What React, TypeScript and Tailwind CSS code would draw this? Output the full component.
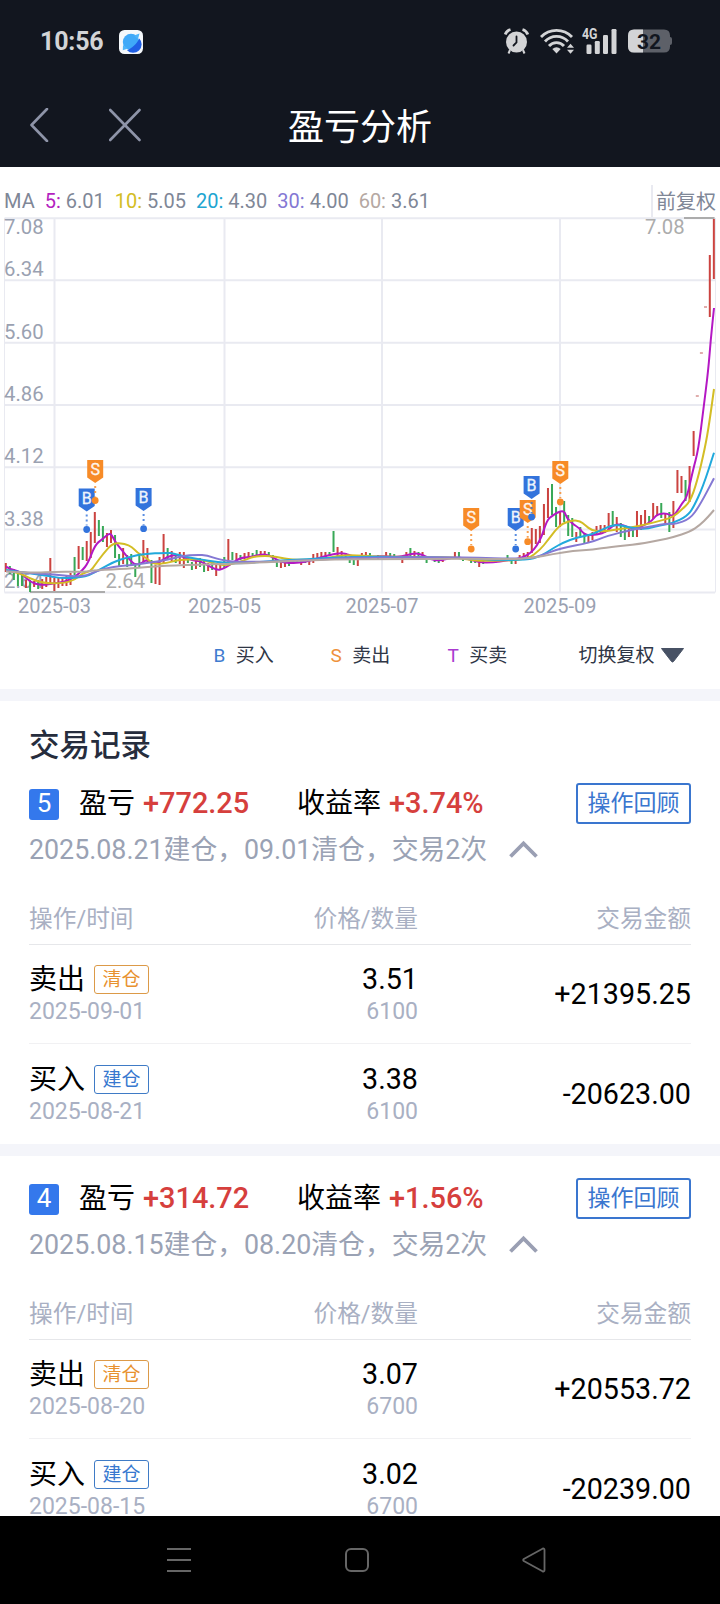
import React from "react";

type Point = [number, number];
type Candle = [number, number, number, "r" | "g"];

// index on the time axis, top, bottom, direction
const candles: Candle[] = [
  [0, 563, 572, "r"], [1, 566, 574, "g"], [2, 569, 580, "g"], [3, 572, 586, "g"], [4, 575, 586, "g"],
  [5, 580, 588, "r"], [6, 580, 592, "g"], [7, 581, 587, "r"], [8, 580, 589, "g"], [9, 579, 589, "r"],
  [10, 577, 587, "r"], [11, 558, 585, "r"], [12, 578, 591, "r"], [13, 577, 588, "r"], [14, 577, 586, "r"],
  [15, 575, 586, "r"], [16, 573, 585, "r"], [17, 557, 575, "g"], [18, 546, 569, "r"], [19, 547, 560, "g"],
  [20, 541, 561, "r"], [21, 532, 558, "r"], [22, 512, 543, "r"], [23, 520, 536, "g"], [24, 526, 542, "g"],
  [25, 533, 547, "r"], [26, 530, 543, "r"], [27, 535, 558, "g"], [28, 554, 566, "g"], [29, 548, 564, "r"],
  [30, 555, 567, "g"], [31, 554, 566, "g"], [32, 563, 577, "g"], [33, 553, 568, "g"], [34, 540, 563, "r"],
  [35, 548, 563, "r"], [36, 560, 583, "g"], [37, 565, 584, "r"], [38, 557, 585, "r"], [39, 534, 563, "r"],
  [40, 548, 560, "g"], [41, 551, 561, "r"], [42, 555, 563, "g"], [43, 552, 564, "r"], [44, 552, 568, "r"],
  [45, 557, 563, "g"], [46, 562, 570, "g"], [47, 558, 569, "r"], [48, 558, 567, "g"], [49, 560, 572, "g"],
  [50, 563, 571, "r"], [51, 563, 570, "g"], [52, 565, 576, "r"], [53, 563, 569, "r"], [54, 557, 568, "g"],
  [55, 539, 563, "r"], [56, 552, 560, "g"], [57, 553, 560, "r"], [58, 555, 560, "g"], [59, 553, 559, "r"],
  [60, 552, 558, "r"], [61, 553, 558, "g"], [62, 550, 556, "g"], [63, 551, 557, "r"], [64, 551, 556, "r"],
  [65, 552, 557, "g"], [66, 555, 560, "g"], [67, 562, 567, "g"], [68, 562, 568, "r"], [69, 562, 567, "r"],
  [70, 562, 566, "g"], [71, 559, 564, "r"], [72, 559, 563, "g"], [73, 560, 565, "r"], [74, 559, 563, "g"],
  [75, 560, 565, "r"], [76, 554, 563, "r"], [77, 553, 559, "r"], [78, 552, 559, "r"], [79, 552, 557, "r"],
  [80, 552, 556, "g"], [81, 531, 552, "g"], [82, 547, 557, "r"], [83, 551, 558, "r"], [84, 553, 559, "r"],
  [85, 557, 563, "g"], [86, 559, 565, "g"], [87, 560, 566, "r"], [88, 553, 559, "r"], [89, 552, 558, "r"],
  [90, 553, 557, "g"], [92, 555, 559, "g"], [94, 552, 558, "r"], [95, 553, 558, "g"], [96, 554, 558, "g"],
  [98, 557, 563, "r"], [99, 552, 558, "r"], [100, 548, 557, "g"], [101, 551, 557, "r"], [102, 552, 557, "g"],
  [103, 552, 557, "r"], [104, 558, 563, "g"], [106, 558, 562, "g"], [107, 559, 563, "g"], [108, 558, 562, "r"],
  [111, 552, 557, "r"], [112, 552, 558, "g"], [113, 557, 561, "g"], [114, 557, 560, "r"], [115, 557, 563, "g"],
  [116, 558, 563, "g"], [117, 562, 567, "r"], [118, 561, 564, "g"], [121, 560, 563, "r"], [124, 555, 559, "g"],
  [125, 560, 564, "g"], [126, 560, 564, "r"], [127, 555, 559, "r"], [128, 553, 557, "r"], [129, 552, 557, "r"],
  [130, 528, 553, "r"], [131, 529, 544, "r"], [132, 526, 543, "r"], [133, 504, 535, "r"], [134, 488, 518, "r"],
  [135, 484, 515, "g"], [136, 507, 527, "g"], [137, 512, 527, "r"], [138, 501, 522, "g"], [139, 515, 536, "g"],
  [140, 518, 537, "g"], [141, 532, 542, "r"], [142, 527, 537, "g"], [143, 533, 543, "g"], [144, 535, 542, "r"],
  [145, 532, 540, "r"], [146, 526, 535, "r"], [147, 525, 534, "r"], [148, 525, 533, "r"], [149, 513, 530, "r"],
  [150, 511, 527, "g"], [151, 517, 532, "r"], [152, 523, 537, "g"], [153, 526, 540, "g"], [154, 527, 537, "r"],
  [155, 527, 537, "g"], [156, 511, 537, "r"], [157, 515, 530, "r"], [158, 510, 525, "r"], [159, 516, 523, "g"],
  [160, 503, 519, "r"], [161, 506, 515, "r"], [162, 503, 518, "g"], [163, 513, 523, "r"], [164, 512, 532, "g"],
  [165, 501, 528, "r"], [166, 470, 493, "r"], [167, 476, 493, "r"], [168, 480, 501, "g"], [169, 466, 502, "r"],
  [170, 431, 456, "r"], [174, 255, 317, "r"], [175, 219, 279, "r"],
];

// days that opened at the limit and never moved
const limitDays: Point[] = [[697.3, 396], [701.4, 353], [705.5, 307]];

const ma60: Point[] = [
  [6, 571.5], [33, 573], [57, 571.7], [83, 572], [97, 570], [127, 569], [150, 566.7], [183, 565], [240, 563.5],
  [273, 561.7], [337, 559.3], [383, 559.3], [470, 558.6], [507, 559.3], [533, 558], [553, 554], [573, 551],
  [593, 549.7], [610, 547], [640, 544], [660, 540], [673, 537.3], [690, 531.7], [700, 525], [708, 517], [714, 510],
];
const ma30: Point[] = [
  [6, 571], [30, 573.3], [50, 574], [73, 576.7], [87, 575.7], [97, 570.7], [113, 566.7], [133, 565], [150, 562.3],
  [167, 560], [182, 556], [197, 554.7], [207, 555.3], [220, 560], [240, 562.3], [307, 560.7], [337, 558.3],
  [383, 557.3], [460, 557], [527, 559.3], [543, 555], [560, 548.3], [590, 542.7], [607, 536], [633, 529.3],
  [653, 526], [667, 523.3], [675, 524.3], [690, 519], [700, 505], [714, 478.3],
];
const ma20: Point[] = [
  [6, 570], [30, 573.3], [50, 576], [60, 578.3], [80, 577.7], [90, 575], [100, 569.3], [113, 562.3], [127, 557.3],
  [143, 554], [167, 552.7], [173, 553.3], [187, 557.3], [200, 559.3], [217, 562.3], [240, 563.7], [273, 560.7],
  [307, 559.3], [337, 557.3], [373, 556.7], [407, 557.3], [460, 557.5], [493, 560], [527, 560], [540, 556.7],
  [553, 548.3], [563, 542.7], [577, 537.3], [590, 535], [600, 530.7], [610, 526], [620, 524.7], [630, 527.7],
  [647, 529.3], [660, 525], [673, 523.3], [687, 516], [693, 508.3], [703, 486.7], [714, 452.7],
];
const ma10: Point[] = [
  [6, 570], [20, 573.3], [30, 578.3], [43, 583.3], [63, 583.3], [75, 580], [83, 572.7], [90, 571.7], [95, 565],
  [103, 554], [113, 542.7], [125, 544], [132, 546.7], [137, 552.7], [147, 558.3], [153, 564], [167, 563.3],
  [177, 560], [185, 560], [197, 558.7], [210, 561.7], [223, 566], [240, 562], [253, 556.7], [265, 555.7],
  [277, 556.7], [287, 559.3], [307, 560], [320, 559.3], [337, 556], [353, 555], [373, 556.7], [413, 556.7],
  [427, 557.3], [453, 557.3], [465, 559], [480, 561], [507, 560.7], [528, 559], [540, 550], [548, 540], [557, 528.3],
  [563, 523.3], [573, 520.3], [580, 521], [585, 525], [592, 530.7], [603, 531.7], [617, 529.3], [630, 527.7],
  [647, 524.3], [663, 520], [673, 517.3], [682, 509.3], [690, 501.7], [697, 482], [705, 448], [709.3, 423], [714, 389],
];
const ma5: Point[] = [
  [6, 566.7], [10, 569.3], [18, 570.7], [23, 575], [30, 581.7], [40, 585.3], [50, 584], [60, 582.3], [67, 581],
  [75, 576.7], [82, 570.7], [88, 563.3], [95, 545], [102, 539.3], [107, 535], [111, 533.3], [115, 541.7],
  [123, 551.7], [130, 560], [135, 565], [142, 563.3], [147, 559.3], [152, 563.3], [158, 563.3], [167, 556.7],
  [177, 554.3], [183, 556.7], [192, 560.7], [200, 560.7], [208, 565.7], [217, 570], [222, 569.3], [230, 565],
  [240, 557.5], [250, 557.3], [258, 555], [265, 554.3], [272, 556.7], [278, 560.7], [287, 563.3], [300, 562.7],
  [310, 560.7], [323, 556.7], [337, 553.3], [345, 553.3], [353, 556.7], [363, 559.3], [373, 556.7], [387, 556],
  [400, 557.3], [413, 553.3], [422, 554], [430, 559.3], [440, 560.7], [453, 557.3], [467, 558.3], [480, 562.7],
  [493, 562.3], [507, 560.7], [528, 556.7], [540, 541.7], [547, 520], [552, 516], [557, 512.7], [564, 510.3],
  [567, 518.3], [573, 524.3], [579, 527.7], [585, 535.3], [597, 534.7], [607, 531.7], [613, 525], [620, 524.3],
  [627, 526.7], [633, 529.3], [643, 526], [652, 521], [657, 514], [667, 513.3], [673, 516.7], [678, 510],
  [682, 503.3], [687, 497.3], [693, 470], [698.3, 450], [703.3, 410], [708.3, 370], [710.7, 340], [714, 308],
];

const averages = [
  { days: "5:", value: "6.01", text: "text-[#b41fc0]", stroke: "#b418c4", points: ma5 },
  { days: "10:", value: "5.05", text: "text-[#d3bd25]", stroke: "#d3bd25", points: ma10 },
  { days: "20:", value: "4.30", text: "text-[#21a5d1]", stroke: "#21a9dc", points: ma20 },
  { days: "30:", value: "4.00", text: "text-[#8478d4]", stroke: "#8478d4", points: ma30 },
  { days: "60:", value: "3.61", text: "text-[#b5a8a2]", stroke: "#b5a8a2", points: ma60 },
];

const priceLabels: [string, number][] = [
  ["7.08", 233.7], ["6.34", 275.7], ["5.60", 338.7], ["4.86", 401], ["4.12", 463], ["3.38", 525.7], ["2.64", 588],
];

const months: [string, number][] = [
  ["2025-03", 54.5], ["2025-05", 224.5], ["2025-07", 382], ["2025-09", 560],
];

// x, top of the flag, dot
const trades: ["B" | "S", number, number, number][] = [
  ["B", 86.7, 488.5, 529.5],
  ["S", 95.2, 460, 500.5],
  ["B", 143.6, 488, 528.7],
  ["S", 471.2, 508, 549],
  ["B", 515.7, 508, 549],
  ["S", 527.7, 500, 541.7],
  ["B", 531.6, 476, 517],
  ["S", 560.3, 461, 502],
];

const records = [
  {
    no: 5,
    profit: "+772.25",
    rate: "+3.74%",
    summary: "2025.08.21建仓，09.01清仓，交易2次",
    rows: [
      { side: "卖出", tag: "清仓", date: "2025-09-01", price: "3.51", count: "6100", amount: "+21395.25" },
      { side: "买入", tag: "建仓", date: "2025-08-21", price: "3.38", count: "6100", amount: "-20623.00" },
    ],
  },
  {
    no: 4,
    profit: "+314.72",
    rate: "+1.56%",
    summary: "2025.08.15建仓，08.20清仓，交易2次",
    rows: [
      { side: "卖出", tag: "清仓", date: "2025-08-20", price: "3.07", count: "6700", amount: "+20553.72" },
      { side: "买入", tag: "建仓", date: "2025-08-15", price: "3.02", count: "6700", amount: "-20239.00" },
    ],
  },
];

const toPath = (points: Point[]) => {
  let d = `M${points[0][0]} ${points[0][1]}`;
  for (let i = 1; i < points.length - 1; i++) {
    const [x, y] = points[i];
    const [nx, ny] = points[i + 1];
    d += `Q${x} ${y} ${(x + nx) / 2} ${(y + ny) / 2}`;
  }
  const last = points[points.length - 1];
  return `${d}L${last[0]} ${last[1]}`;
};

const StatusBar = () => (
  <div className="flex h-[83px] items-center pl-10 pr-[48px] text-[#d3d4d6]">
    <span className="text-[25px] font-bold leading-none tracking-[-0.2px]">10:56</span>
    <svg width="24" height="24" viewBox="0 0 24 24" className="ml-4">
      <rect width="24" height="24" rx="5.5" fill="#f4f8fb" />
      <circle cx="12" cy="12" r="8.2" fill="#3fa9f8" />
      <path d="M20.3 8.5A8.4 8.4 0 0 1 8 20.2C13 18.500 18 13.500 20.300 8.500Z" fill="#1f5fe4" />
      <path d="M15 5.500L20.500 3.600L19 9Z M4 15L3.800 20.300L9 18.500Z" fill="#4db4fa" />
    </svg>
    <div className="ml-auto flex items-center pb-0.5">
      <svg width="26" height="26" viewBox="0 0 26 26">
        <circle cx="12.500" cy="14" r="10.500" fill="currentColor" />
        <path d="M1.200 6.500A8 8 0 0 1 6.500 1.500M23.800 6.500A8 8 0 0 0 18.500 1.500" stroke="currentColor" strokeWidth="2.800" fill="none" />
        <path d="M6 22L4.500 25.500M19 22L20.500 25.500" stroke="currentColor" strokeWidth="2" />
        <path d="M12.500 8.500V14.500L9.500 17.500" stroke="#12161f" strokeWidth="1.800" fill="none" strokeLinecap="round" />
      </svg>
      <svg width="36" height="26" viewBox="0 0 36 26" className="ml-[10px]" fill="none" stroke="currentColor" strokeWidth="2.800">
        <path d="M1 9A21.500 21.500 0 0 1 32 9" />
        <path d="M5 13.500A15.500 15.500 0 0 1 28 13.500" />
        <path d="M9 18A10 10 0 0 1 24 18" />
        <path d="M12.300 21Q16.500 17.700 20.700 21L16.500 25.400Z" fill="currentColor" stroke="none" />
        <path d="M27 19.700L30.500 15.700L34 19.700ZM27 21.700L30.500 25.700L34 21.700Z" fill="currentColor" stroke="none" />
      </svg>
      <svg width="36" height="26" viewBox="0 0 36 26" className="ml-[6px] overflow-visible" fill="currentColor">
        <text x="0" y="11" fontSize="14.500" fontWeight="700" textLength="15.500" lengthAdjust="spacingAndGlyphs">4G</text>
        <rect x="4.500" y="16.500" width="5" height="9.500" rx="1.200" />
        <rect x="12.800" y="13" width="5" height="13" rx="1.200" />
        <rect x="21" y="7" width="5" height="19" rx="1.200" />
        <rect x="29.500" y="1" width="5" height="25" rx="1.200" />
      </svg>
      <svg width="44" height="24" viewBox="0 0 44 24" className="ml-[10px]">
        <path d="M6 0.500H36Q42 0.500 42 6.500V17.500Q42 23.500 36 23.500H6Q0 23.500 0 17.500V6.500Q0 0.500 6 0.500Z" fill="#5d6068" />
        <path d="M42 8Q44 8 44 10V14Q44 16 42 16Z" fill="#5d6068" />
        <path d="M6 0.500H15V23.500H6Q0 23.500 0 17.500V6.500Q0 0.500 6 0.500Z" fill="#d3d4d6" />
        <text x="21" y="19.500" fontSize="21" fontWeight="700" textAnchor="middle" fill="#12161f">32</text>
      </svg>
    </div>
  </div>
);

const TitleBar = () => (
  <div className="grid h-[84px] grid-cols-[1fr_auto_1fr] items-center px-[30px]">
    <div className="flex items-center gap-[60px]">
      <svg width="19" height="34" viewBox="0 0 19 34" fill="none" stroke="#8e94a8" strokeWidth="2.600" strokeLinecap="round" strokeLinejoin="round">
        <path d="M17 1L1.500 17L17 33" />
      </svg>
      <svg width="32" height="34" viewBox="0 0 32 34" fill="none" stroke="#8e94a8" strokeWidth="2.600" strokeLinecap="round">
        <path d="M1.200 2L30.500 32M30.500 2L1.200 32" />
      </svg>
    </div>
    <h1 className="pt-[5px] text-[36px] leading-none text-white">盈亏分析</h1>
  </div>
);

const Chart = () => (
  <svg width="720" height="407" viewBox="0 217 720 407" className="block overflow-visible">
    <g stroke="#e9eaf1" strokeWidth="2">
      {[218.3, 280.2, 342.7, 405, 467.2, 529.6, 592.5].map((y) => (
        <line key={y} x1="4.500" x2="715" y1={y} y2={y} />
      ))}
      {months.map(([name, x]) => (
        <line key={name} x1={x} x2={x} y1="218" y2="592.500" />
      ))}
      <path d="M4.500 218V592.500M715.500 218V592.500" strokeWidth="1" />
    </g>
    <g fontSize="20.300" fill="#9aa1b1">
      {priceLabels.map(([label, y]) => (
        <text key={label} x="4" y={y}>{label}</text>
      ))}
      {months.map(([name, x]) => (
        <text key={name} x={x} y="613" fontSize="20" textAnchor="middle">{name}</text>
      ))}
    </g>
    <path d="M684 218H714.500M30 592H105" stroke="#acacac" strokeWidth="1.800" />
    {candles.map(([i, top, bottom, dir]) => (
      <rect
        key={i}
        x={4.8 + i * 4.046}
        y={top}
        width="2"
        height={bottom - top}
        fill={dir === "r" ? "#cb4340" : "#38a857"}
      />
    ))}
    {limitDays.map(([x, y]) => (
      <rect key={x} x={x - 1.5} y={y - 0.8} width="3" height="1.600" fill="#d99a98" />
    ))}
    <g fill="none" strokeWidth="2" strokeLinejoin="round">
      {averages.map((ma) => (
        <path key={ma.days} d={toPath(ma.points)} stroke={ma.stroke} />
      ))}
    </g>
    <g fontSize="20.300" fill="#acacac">
      <text x="645" y="233.700">7.08</text>
      <text x="105.500" y="588">2.64</text>
    </g>
    {trades.map(([kind, x, top, dot]) => {
      const color = kind === "B" ? "#3273dc" : "#f78b27";
      return (
        <g key={x} fill={color}>
          <path d={`M${x - 8} ${top}h16v17.500l-8 5.500l-8 -5.500Z`} />
          <line x1={x} x2={x} y1={top + 26} y2={dot - 4} stroke={color} strokeWidth="2" strokeDasharray="2 3" opacity="0.8" />
          <circle cx={x} cy={dot} r="3.400" />
          <text x={x} y={top + 15} fontSize="16" textAnchor="middle" fill="#fff" fillOpacity="0.900" stroke="#fff" strokeWidth="0.300">{kind}</text>
        </g>
      );
    })}
  </svg>
);

const ChartPanel = () => (
  <section className="h-[522px] bg-white">
    <div className="flex h-[50px] items-end justify-between pt-[18px] text-[20px] text-[#7f8797]">
      <div className="flex gap-[10px] pb-px pl-1">
        <span>MA</span>
        {averages.map((ma) => (
          <span key={ma.days} className="whitespace-pre">
            <span className={ma.text}>{ma.days}</span> {ma.value}
          </span>
        ))}
      </div>
      <div className="flex h-[32px] items-center border-l-2 border-[#e9eaf1] pl-[3px] pr-1 pt-0.5 leading-none">前复权</div>
    </div>
    <Chart />
    <div className="flex h-[62px] items-center pl-[213.500px] text-[19px] leading-none text-[#2f3646]">
      <span className="w-[117px]"><span className="mr-[10.500px] text-[#3f7bcf]">B</span>买入</span>
      <span className="w-[117px]"><span className="mr-[10.500px] text-[#ee913b]">S</span>卖出</span>
      <span className="w-[131px]"><span className="mr-[10.500px] text-[#a93ad0]">T</span>买卖</span>
      <span>切换复权</span>
      <svg width="25" height="16" viewBox="0 0 25 16" className="ml-[5px]">
        <path d="M1.500 1.500H23.500L13.500 14.500Q12.500 15.500 11.500 14.500Z" fill="#475164" stroke="#475164" strokeLinejoin="round" />
      </svg>
    </div>
  </section>
);

const Tag = ({ label }: { label: string }) => {
  const tone = label === "清仓" ? "border-[#dc9a48] text-[#e8912f]" : "border-[#3f7bc6] text-[#3878cf]";
  return (
    <span className={`ml-[9px] flex h-[29px] w-[55px] items-center justify-center rounded-[3px] border text-[19px] leading-none ${tone}`}>
      {label}
    </span>
  );
};

const TradeRecord = ({ record }: { record: (typeof records)[number] }) => (
  <section className="px-[29px]">
    <div className="flex h-[41px] items-center leading-none">
      <span className="mt-px flex h-[31px] w-[30px] items-center justify-center rounded-[3px] bg-[#3478ec] pb-0.5 text-[26px] text-white">
        {record.no}
      </span>
      <span className="ml-[20px] flex w-[218px] items-center gap-[8px] text-[28px] text-black">
        盈亏<span className="text-[28.900px] font-medium text-[#d63f3d]">{record.profit}</span>
      </span>
      <span className="flex items-center gap-[8px] text-[28px] text-black">
        收益率<span className="text-[28.900px] font-medium text-[#d63f3d]">{record.rate}</span>
      </span>
      <button className="ml-auto h-[41px] w-[115px] rounded-[3px] border-2 border-[#3a76cf] text-[23px] leading-none text-[#3a76cf]">
        操作回顾
      </button>
    </div>
    <div className="mt-[6px] flex h-[40px] items-center text-[26.800px] leading-none text-[#9aa2b4]">
      {record.summary}
      <svg width="29" height="18" viewBox="0 0 29 18" className="mb-0.5 ml-[22px]" fill="none" stroke="#9a9fb3" strokeWidth="3.800">
        <path d="M1.500 16.500L14.500 3.500L27.500 16.500" />
      </svg>
    </div>
    <div className="mt-[24px] grid h-[51px] grid-cols-[169px_220px_1fr] items-center border-b border-[#e6e7ea] pt-0.5 text-[23.700px] leading-none text-[#a9b0c3]">
      <span>操作/时间</span>
      <span className="text-right">价格/数量</span>
      <span className="text-right">交易金额</span>
    </div>
    {record.rows.map((row) => (
      <div
        key={row.date}
        className="grid h-[99px] grid-cols-[169px_220px_1fr] items-center border-b border-[#f1f1f3] text-[28.700px] leading-none text-black last:h-[100px] last:border-b-0"
      >
        <div className="pt-[3px]">
          <div className="flex h-[32px] items-center text-[28px]">
            {row.side}
            <Tag label={row.tag} />
          </div>
          <div className="flex h-[32px] items-center text-[23px] text-[#a9b0c3]">{row.date}</div>
        </div>
        <div className="pt-[2px] text-right">
          <div className="flex h-[32px] items-center justify-end">{row.price}</div>
          <div className="flex h-[32px] items-center justify-end text-[23px] text-[#a9b0c3]">{row.count}</div>
        </div>
        <div className="text-right">{row.amount}</div>
      </div>
    ))}
  </section>
);

const NavBar = () => (
  <nav className="flex h-[88px] items-center bg-black pl-[167px]">
    <svg width="24" height="26" viewBox="0 0 24 26" stroke="#666" strokeWidth="2">
      <path d="M0 2H24M0 13H24M0 24H24" />
    </svg>
    <svg width="24" height="26" viewBox="0 0 24 26" className="ml-[154px]" fill="none" stroke="#666" strokeWidth="2">
      <rect x="1" y="2" width="22" height="22" rx="5" />
    </svg>
    <svg width="24" height="26" viewBox="0 0 24 26" className="ml-[153px]" fill="none" stroke="#666" strokeWidth="1.800" strokeLinejoin="round">
      <path d="M1.800 12Q0.600 13 1.800 14L20.500 24.300Q22.500 25 22.500 23V3Q22.500 1 20.500 1.700Z" />
    </svg>
  </nav>
);

export default function App() {
  return (
    <div className="flex h-[1604px] w-[720px] flex-col overflow-hidden bg-white font-[Roboto,'Noto_Sans_CJK_SC',sans-serif]">
      <header className="bg-[#12161f]">
        <StatusBar />
        <TitleBar />
      </header>
      <main className="h-[1349px] overflow-hidden">
        <ChartPanel />
        <div className="h-3 bg-[#f4f5fa]" />
        <h2 className="flex h-[82px] items-center px-[29px] pt-2 text-[30.500px] font-medium leading-none text-[#262d3d]">交易记录</h2>
        <TradeRecord record={records[0]} />
        <div className="mb-[22px] h-3 bg-[#f4f5fa]" />
        <TradeRecord record={records[1]} />
      </main>
      <NavBar />
    </div>
  );
}
